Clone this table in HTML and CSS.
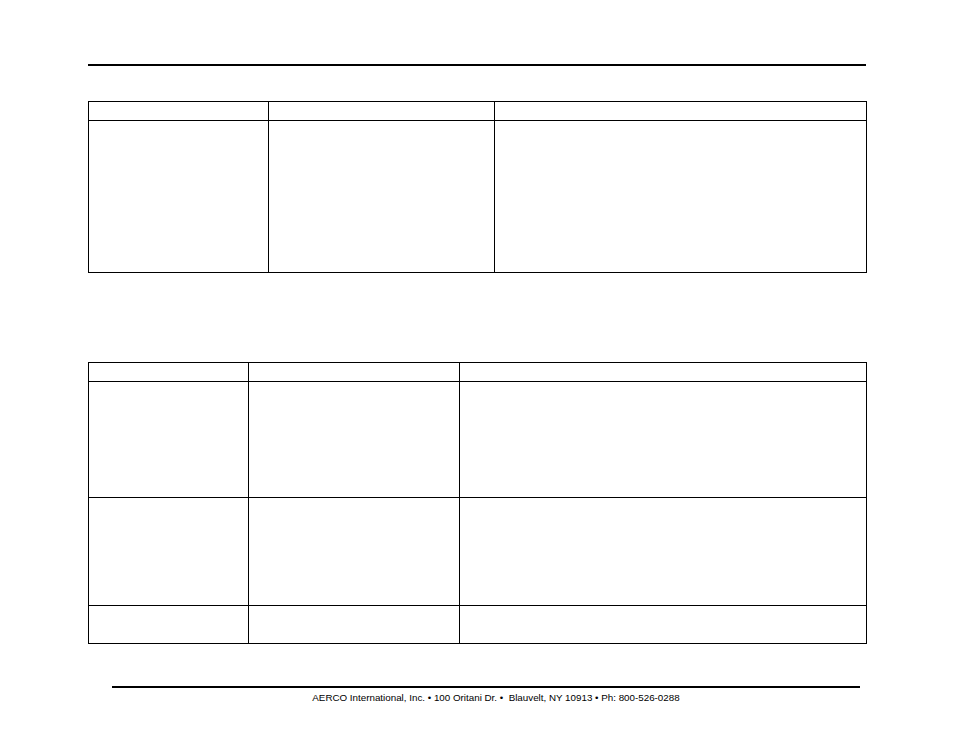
FILE: index.html
```html
<!DOCTYPE html>
<html>
<head>
<meta charset="utf-8">
<link rel="stylesheet" href="styles.css">
</head>
<body>
<div class="page">
  <div class="top-rule"></div>
  <table class="grid t1">
    <colgroup><col class="c1"><col class="c2"><col class="c3"></colgroup>
    <tr class="head"><td></td><td></td><td></td></tr>
    <tr class="r1"><td></td><td></td><td></td></tr>
  </table>
  <table class="grid t2">
    <colgroup><col class="c1"><col class="c2"><col class="c3"></colgroup>
    <tr class="head"><td></td><td></td><td></td></tr>
    <tr class="r1"><td></td><td></td><td></td></tr>
    <tr class="r2"><td></td><td></td><td></td></tr>
    <tr class="r3"><td></td><td></td><td></td></tr>
  </table>
  <footer class="footer">
    <div class="footer-rule"></div>
    <p class="footer-text">AERCO International, Inc. • 100 Oritani Dr. •&nbsp; Blauvelt, NY 10913 • Ph: 800-526-0288</p>
  </footer>
</div>
</body>
</html>
```
FILE: styles.css
```css
html, body {
  margin: 0;
  padding: 0;
  background: #fff;
}
.page {
  width: 954px;
  height: 738px;
  padding-top: 64px;
  box-sizing: border-box;
  font-family: "Liberation Sans", Arial, sans-serif;
}
.top-rule {
  margin-left: 88px;
  width: 778px;
  height: 2px;
  background: #000;
}
.grid {
  border-collapse: collapse;
  table-layout: fixed;
  margin-left: 88px;
  width: 778px;
}
.grid td {
  border: 1px solid #000;
  padding: 0;
}
.t1 { margin-top: 35px; }
.t1 .c1 { width: 180px; }
.t1 .c2 { width: 226px; }
.t1 .c3 { width: 372px; }
.t1 .head td { height: 18px; }
.t1 .r1 td { height: 151px; }

.t2 { margin-top: 89px; }
.t2 .c1 { width: 160px; }
.t2 .c2 { width: 211px; }
.t2 .c3 { width: 407px; }
.t2 .head td { height: 18px; }
.t2 .r1 td { height: 115px; }
.t2 .r2 td { height: 107px; }
.t2 .r3 td { height: 37px; }

.footer {
  margin-top: 42px;
}
.footer-rule {
  margin-left: 112px;
  width: 748px;
  height: 2px;
  background: #000;
}
.footer-text {
  margin: 4px 0 0 0;
  padding-left: 38px;
  text-align: center;
  font-size: 9.8px;
  color: #000;
}
```
